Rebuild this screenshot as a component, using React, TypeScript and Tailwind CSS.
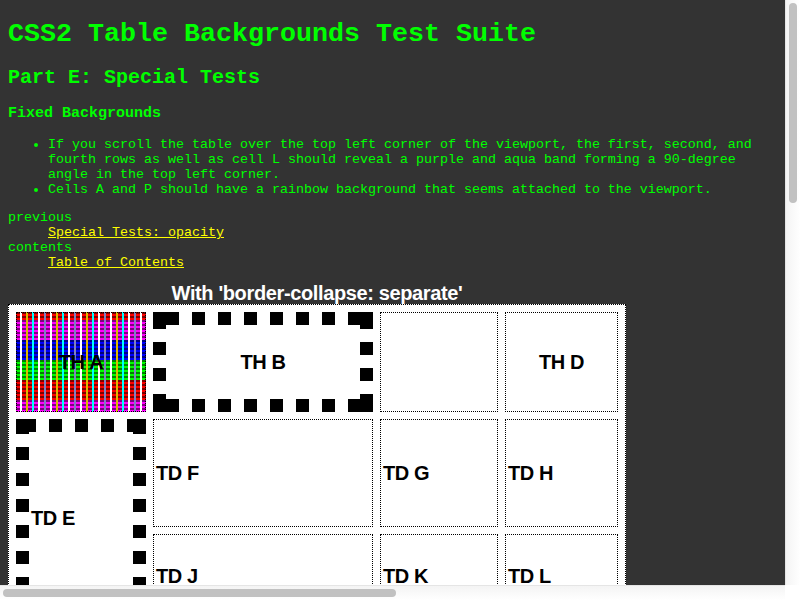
import type { ReactNode } from "react";

const dashX =
  "absolute left-0 right-0 h-[13px] bg-[repeating-linear-gradient(90deg,#0000_0,#0000_13px,#000_13px,#000_26px)]";
const dashY =
  "absolute top-0 bottom-0 w-[13px] bg-[repeating-linear-gradient(180deg,#0000_0,#0000_13px,#000_13px,#000_26px)]";

function Dashes({ x, y, open = false }: { x: string; y: string; open?: boolean }) {
  return (
    <>
      <i className={`${dashX} top-0 ${x}`} />
      {!open && <i className={`${dashX} bottom-0 ${x}`} />}
      <i className={`${dashY} left-0 ${y}`} />
      <i className={`${dashY} right-0 ${y}`} />
      <i className="absolute top-0 left-0 size-[13px] bg-black" />
      <i className="absolute top-0 right-0 size-[13px] bg-black" />
      {!open && <i className="absolute bottom-0 left-0 size-[13px] bg-black" />}
      {!open && <i className="absolute right-0 bottom-0 size-[13px] bg-black" />}
    </>
  );
}

function Cell({ children, className = "" }: { children?: ReactNode; className?: string }) {
  return (
    <div className={`flex items-center border border-dotted border-black px-[2px] ${className}`}>
      {children}
    </div>
  );
}

export default function App() {
  return (
    <div className="grid h-[600px] w-[800px] grid-cols-[785px_15px] grid-rows-[585px_15px] overflow-hidden bg-white">
      <main className="overflow-hidden bg-[#333] pl-2 font-['Liberation_Mono',monospace] text-[13.333px] leading-[15px] text-[#0f0]">
        <h1 className="mt-[19px] h-[30px] text-[26.667px] leading-[30px] font-bold">CSS2 Table Backgrounds Test Suite</h1>
        <h2 className="mt-[17px] h-[23px] text-[20px] leading-[23px] font-bold">Part E: Special Tests</h2>
        <h3 className="mt-[16px] h-[17px] text-[15px] leading-[17px] font-bold">Fixed Backgrounds</h3>
        <ul className="mt-[15px] list-disc pl-10">
          <li>
            If you scroll the table over the top left corner of the viewport, the first, second, and
            <br />
            fourth rows as well as cell L should reveal a purple and aqua band forming a 90-degree
            <br />
            angle in the top left corner.
          </li>
          <li>Cells A and P should have a rainbow background that seems attached to the viewport.</li>
        </ul>
        <dl className="mt-[13px]">
          <dt>previous</dt>
          <dd className="pl-10">
            <a className="text-[#ff0] underline">Special Tests: opacity</a>
          </dd>
          <dt>contents</dt>
          <dd className="pl-10">
            <a className="text-[#ff0] underline">Table of Contents</a>
          </dd>
        </dl>
        <section className="mt-[12px] w-[618px] font-['Liberation_Sans',sans-serif] text-[20px] leading-[22px] font-bold tracking-[-0.37px] text-black">
          <div className="h-[22px] text-center text-white">With 'border-collapse: separate'</div>
          <div className="grid h-[400px] grid-cols-[130px_220px_118px_113px] grid-rows-[100px_108px_108px] gap-[7px] border border-dotted border-black bg-white p-[7px]">
            <Cell className="justify-center bg-[repeating-linear-gradient(90deg,#0000_0,#0000_4px,#fff_4px,#fff_6px,#0000_6px,#0000_10px,#dcb900_10px,#dcb900_12px,#0000_12px,#0000_16px,#0ff_16px,#0ff_18px,#0000_18px,#0000_22px,#fff_22px,#fff_24px,#0000_24px,#0000_28px,#8080c0_28px,#8080c0_30px),repeating-linear-gradient(180deg,#00000080_0,#00000080_2px,#0000_2px,#0000_4px),linear-gradient(180deg,#f00_8px,#f0f_8px,#f0f_28px,#00f_28px,#00f_48px,#0f0_48px,#0f0_68px,#f00_68px,#f00_88px,#f0f_88px)] bg-origin-border">
              TH A
            </Cell>
            <div className="relative flex items-center justify-center">
              <Dashes x="bg-position-[0_0]" y="bg-position-[0_-9px]" />
              TH B
            </div>
            <Cell />
            <Cell className="justify-center">TH D</Cell>
            <div className="relative row-span-2 flex pt-[88px] pl-[15px]">
              <Dashes x="bg-position-[-6px_0]" y="bg-position-[0_-11px]" open />
              TD E
            </div>
            <Cell>TD F</Cell>
            <Cell>TD G</Cell>
            <Cell>TD H</Cell>
            <Cell className="!items-start pt-[33px] leading-[16px]">TD J</Cell>
            <Cell className="!items-start pt-[33px] leading-[16px]">TD K</Cell>
            <Cell className="!items-start pt-[33px] leading-[16px]">TD L</Cell>
          </div>
        </section>
      </main>
      <div className="border-l border-[#e5e5e5] bg-linear-to-r from-[#f4f4f4] to-white pt-[3px] pl-[3px]">
        <div className="h-[200px] w-2 rounded-full bg-[#c1c1c1]" />
      </div>
      <div className="border-t border-[#e5e5e5] bg-linear-to-b from-[#f4f4f4] to-white pt-[3px] pl-[3px]">
        <div className="h-2 w-[393px] rounded-full bg-[#c1c1c1]" />
      </div>
    </div>
  );
}
